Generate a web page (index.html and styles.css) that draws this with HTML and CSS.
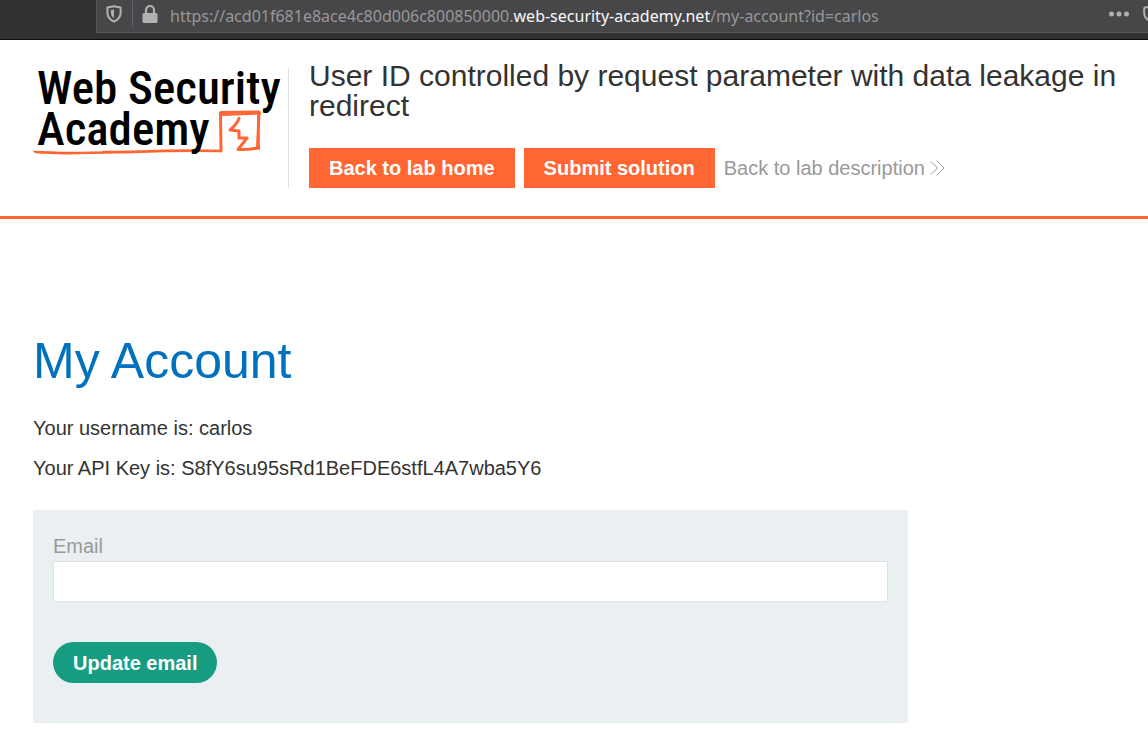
FILE: index.html
```html
<!DOCTYPE html>
<html lang="en">
<head>
<meta charset="utf-8">
<meta name="viewport" content="width=device-width, initial-scale=1">
<title>User ID controlled by request parameter with data leakage in redirect</title>
<link rel="stylesheet" href="styles.css">
</head>
<body>
<div class="toolbar">
  <div class="address">
    <svg class="shield" viewBox="0 0 16 18" aria-hidden="true"><path d="M8 1.200 14.600 2.600V8c0 4-2.600 6.700-6.600 8.600C4 14.700 1.400 12 1.400 8V2.600Z" fill="none" stroke="#b1b1b3" stroke-width="2" stroke-linejoin="round"/><path d="M8 4.500v8.600C6 11.800 5 10.200 5 8V5Z" fill="#b1b1b3"/></svg>
    <span class="separator"></span>
    <svg class="lock" viewBox="0 0 16 18" aria-hidden="true"><rect x="0.500" y="8" width="15" height="10" rx="1.500" fill="#b1b1b3"/><path d="M4 8.500V5a4 4 0 0 1 8 0v3.500" fill="none" stroke="#b1b1b3" stroke-width="2.200"/></svg>
    <span class="url">https://acd01f681e8ace4c80d006c800850000.<span class="domain">web-security-academy.net</span>/my-account?id=carlos</span>
    <svg class="dots" viewBox="0 0 20 6" aria-hidden="true"><g fill="#b1b1b3"><circle cx="2.500" cy="3" r="2.500"/><circle cx="10" cy="3" r="2.500"/><circle cx="17.500" cy="3" r="2.500"/></g></svg>
    <svg class="pocket" viewBox="0 0 18 16" aria-hidden="true"><path d="M3 1.200h12q1.800 0 1.800 1.800v4.200a7.800 7.600 0 0 1-15.600 0V3Q1.200 1.200 3 1.200Z" fill="none" stroke="#b1b1b3" stroke-width="2"/></svg>
  </div>
</div>
<header class="lab-header">
  <a class="logo" href="#" aria-label="Web Security Academy">
    <svg viewBox="0 0 256 120">
      <g fill="none" stroke="#ff6633" stroke-linejoin="round" stroke-linecap="round">
        <path d="M3 84 Q20 85.500 45 85 L100 84 Q150 82 188 83" stroke-width="2.600"/>
        <path d="M1 83.500 35 85M70 83.500 165 83" stroke-width="1.500"/>
        <path d="M188 83 187.500 46Q187 44 190 44.500L226 44 224.500 80Q216 82 205 81.500L214 70H206V63L197 62Q204 56 206 50.500" stroke-width="3"/>
        <path d="M188 47 227 45.500M225 45 226 81" stroke-width="2"/>
      </g>
      <g class="logo-text"><text x="4" y="36">Web Security</text><text x="4" y="77">Academy</text></g>
    </svg>
  </a>
  <div class="lab-info">
    <h2>User ID controlled by request parameter with data leakage in redirect</h2>
    <nav class="actions">
      <a class="button" href="#">Back to lab home</a>
      <a class="button" href="#">Submit solution</a>
      <a class="back" href="#">Back to lab description <svg viewBox="0 0 15 14" aria-hidden="true"><path d="M1 0.500 7.500 7 1 13.500M7.500 0.500 14 7 7.500 13.500" fill="none" stroke="#999" stroke-width="1"/></svg></a>
    </nav>
  </div>
</header>
<main class="account">
  <h1>My Account</h1>
  <p>Your username is: carlos</p>
  <p>Your API Key is: S8fY6su95sRd1BeFDE6stfL4A7wba5Y6</p>
  <form class="email-form">
    <label for="email">Email</label>
    <input id="email" name="email" type="email">
    <button type="submit">Update email</button>
  </form>
</main>
</body>
</html>
```
FILE: styles.css
```css
* { box-sizing: border-box; }
body {
  margin: 0;
  background: #fff;
  color: #333332;
  font: 20px/24px "Liberation Sans", Arial, sans-serif;
}
.toolbar {
  height: 40px;
  padding-left: 96px;
  overflow: hidden;
  background: #323234;
  border-bottom: 1px solid #0c0c0d;
}
.address {
  display: flex;
  align-items: center;
  height: 33px;
  padding: 0 0 4px 9px;
  background: #474749;
  border: 1px solid #5a5a5c;
  border-width: 0 0 1px 1px;
  border-radius: 0 0 0 2px;
}
.address svg { flex: none; }
.shield { width: 16px; height: 18px; }
.separator { width: 1px; height: 26px; margin: 0 9px 0 10px; background: #5f6670; }
.lock { width: 16px; height: 18px; }
.url {
  flex: 1;
  margin-left: 12px;
  padding-top: 4px;
  overflow: hidden;
  color: #98989a;
  font: 16px/24px "Noto Sans", sans-serif;
  white-space: nowrap;
}
.domain { color: #f9f9fa; }
.dots { width: 20px; height: 6px; }
.pocket { width: 18px; height: 16px; margin: 0 -13px 0 14px; }
.lab-header {
  display: flex;
  gap: 20px;
  padding: 21px 30px 28px 33px;
  border-bottom: 3px solid #ff6633;
}
.logo {
  flex: none;
  width: 256px;
  margin-top: 7px;
  border-right: 1px solid #dfdfdf;
}
.logo svg { display: block; width: 256px; height: 120px; overflow: visible; }
.logo-text {
  fill: #000;
  font: 500 47px "Roboto Condensed", Roboto, sans-serif;
}
.lab-info { flex: 1; }
h1, h2 { margin: 0; font-weight: 400; }
h2 { font-size: 30px; line-height: 30px; }
.actions {
  display: flex;
  flex-wrap: wrap;
  align-items: center;
  gap: 9px;
  margin-top: 27px;
}
.button {
  padding: 8px 20px;
  background: #ff6633;
  color: #fff;
  font-weight: 700;
  text-decoration: none;
}
.back { color: #999; text-decoration: none; }
.back svg { width: 15px; height: 14px; }
.account { padding: 112px 33px 17px; }
h1 { margin-bottom: 25px; color: #0071bc; font-size: 50px; line-height: 60px; }
p { margin: 0 0 16px; }
.email-form {
  display: grid;
  justify-items: start;
  max-width: 875px;
  margin-top: 30px;
  padding: 24px 20px 40px;
  background: #eaeff2;
}
label { margin-bottom: 3px; color: #999; }
input {
  width: 100%;
  height: 41px;
  padding: 0 10px;
  border: 1px solid #dfe3e6;
  background: #fff;
  font: inherit;
}
button {
  height: 41px;
  margin-top: 40px;
  padding: 0 20px;
  border: 0;
  border-radius: 21px;
  background: #169c80;
  color: #fff;
  font: inherit;
  font-weight: 700;
}
```
